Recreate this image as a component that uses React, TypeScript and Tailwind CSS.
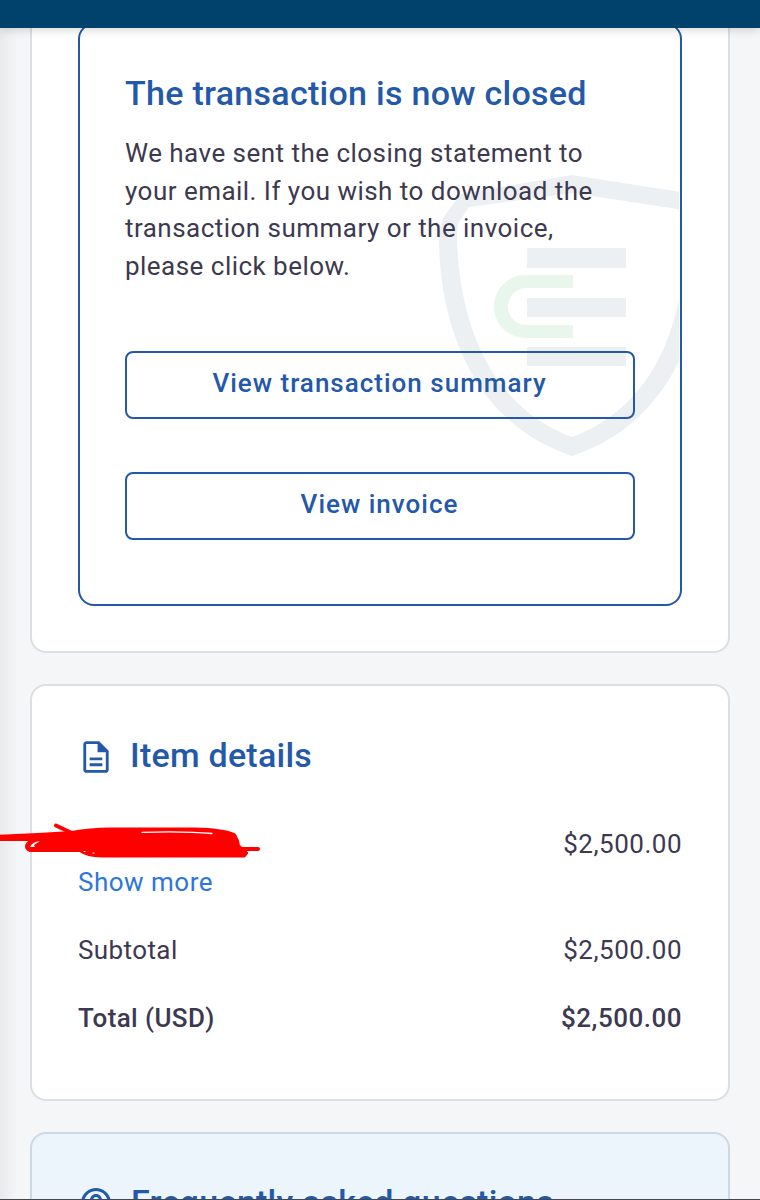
import type { ReactNode } from "react";

interface AmountRowProps {
  label: string;
  amount: string;
  bold?: boolean;
}

function AmountRow({ label, amount, bold }: AmountRowProps) {
  return (
    <div
      className={`flex justify-between text-[26px] leading-[38px] text-[#3d394f] ${
        bold ? "font-medium" : ""
      }`}
    >
      <span className="tracking-[0.4px]">{label}</span>
      <span className="tracking-[0.5px]">{amount}</span>
    </div>
  );
}

function OutlineButton({ children }: { children: ReactNode }) {
  return (
    <button className="flex h-[68px] w-full items-center justify-center rounded-lg border-2 border-[#2459a9] pr-[1px] pb-[3px] text-[26px] font-medium tracking-[1px] text-[#2459a9]">
      {children}
    </button>
  );
}

function ShieldWatermark() {
  return (
    <svg
      className="absolute top-[150px] left-[359px]"
      width="240"
      height="284"
      viewBox="0 0 240 284"
      fill="none"
    >
      <path
        fillRule="evenodd"
        fill="#edf0f3"
        d="M133 0 L241 17 Q267 22 267 58 C267 150 232 249 133 281 C35 249 0 151 0 62 Q0 48 8 37 L20 21 Q22 19 26 18 Z M133 18 L30 32 L20 47 Q18 51 18 62 C20 150 52 232 133 262 C214 232 246 150 246 60 Q246 38 238 34 Z"
      />
      <path fill="#edf0f3" d="M88 73h99v20H88zM88 123h99v19H88zM88 172h99v19H88z" />
      <path
        fill="#e8f6ec"
        d="M134 100v13H88c-11 0-19 8-19 18.500s8 18.500 19 18.500h46v13H86c-17 0-31-14-31-31.500S69 100 86 100z"
      />
    </svg>
  );
}

function DocumentIcon() {
  return (
    <svg className="mt-1 -ml-px" width="38" height="38" viewBox="0 0 24 24" fill="#2459a9">
      <path d="M8 16h8v1.800H8zm0-3.700h8v1.800H8zM14 2H6c-1.100 0-2 .9-2 2v16c0 1.100.89 2 1.990 2H18c1.100 0 2-.9 2-2V8l-6-6zm4.200 18.200H5.800V3.800H13V9h5.200v11.200z" />
    </svg>
  );
}

function HelpIcon() {
  return (
    <svg className="mt-px" width="36" height="36" viewBox="0 0 24 24" fill="#2459a9">
      <path d="M11 18h2v-2h-2v2zm1-16C6.480 2 2 6.480 2 12s4.480 10 10 10 10-4.480 10-10S17.520 2 12 2zm0 18c-4.410 0-8-3.590-8-8s3.590-8 8-8 8 3.590 8 8-3.590 8-8 8zm0-14c-2.210 0-4 1.790-4 4h2c0-1.100.9-2 2-2s2 .9 2 2c0 2-3 1.750-3 5h2c0-2.250 3-2.500 3-5 0-2.210-1.790-4-4-4z" />
    </svg>
  );
}

function Scribble() {
  return (
    <svg
      className="absolute top-[-5px] left-[-78px]"
      width="264"
      height="42"
      viewBox="0 820 264 42"
      fill="none"
      stroke="#fe0000"
      strokeWidth="4"
      strokeLinecap="round"
      strokeLinejoin="round"
    >
      <path
        fill="#fe0000"
        d="M-4 837 L38 835 L72 833 Q90 829.500 110 829.500 L195 829.500 Q222 830 234 835 L237 841 L238 846 L246 853 L244 855.500 L104 855.500 Q88 856 80 850 L30 850 Q24 847 30 842 L34 839 L-4 839 Z"
      />
      <path d="M56 825.500 L76 835" />
      <path d="M228 849 L258 849" />
      <path stroke="#fff" strokeWidth="1.300" d="M142 832.300 Q185 831 212 833.500" />
      <path stroke="none" fill="#fff" d="M30 847 Q32 842 40 841 L34 845 L35 847 Z" />
      <path stroke="#fff" strokeWidth="1.200" d="M84 851.500h1M93 853h1" />
    </svg>
  );
}

export default function App() {
  return (
    <div className="relative flex h-[1200px] w-[760px] flex-col overflow-hidden bg-[#f5f6f8] font-[Roboto,sans-serif]">
      <header className="relative z-10 h-7 shrink-0 bg-[#00426b] shadow-[0_2px_10px_rgba(0,0,0,0.16)]" />

      <main className="-mt-[52px] flex flex-col gap-[31px] bg-[linear-gradient(to_right,#e9eaec,#f5f6f8_18px)] px-[30px]">
        <section className="h-[677px] shrink-0 rounded-2xl border-2 border-[#dddee2] bg-white px-[46px] pt-[45px]">
          <div className="relative h-[583px] overflow-hidden rounded-2xl border-2 border-[#2459a9] px-[45px] pt-[46px]">
            <ShieldWatermark />
            <div className="relative">
              <h2 className="text-[34px] leading-[44px] font-medium tracking-[0.28px] whitespace-nowrap text-[#2459a9]">
                The transaction is now closed
              </h2>
              <p className="mt-[20px] text-[26px] leading-[37.7px] tracking-[0.47px] text-[#3d394f]">
                We have sent the closing statement to
                <br />
                your email. If you wish to download the
                <br />
                transaction summary or the invoice,
                <br />
                please click below.
              </p>
              <div className="mt-[65.2px] flex flex-col gap-[53px]">
                <OutlineButton>View transaction summary</OutlineButton>
                <OutlineButton>View invoice</OutlineButton>
              </div>
            </div>
          </div>
        </section>

        <section className="h-[417px] shrink-0 rounded-2xl border-2 border-[#dddee2] bg-white px-[46px] pt-[47px]">
          <div className="flex items-center gap-[15px] text-[#2459a9]">
            <DocumentIcon />
            <h2 className="text-[34px] leading-[44px] font-medium tracking-[0.25px]">Item details</h2>
          </div>
          <div className="relative mt-[48px]">
            <AmountRow label="" amount="$2,500.00" />
            <Scribble />
          </div>
          <a className="block text-[26px] leading-[38px] tracking-[0.5px] text-[#2d76dc]">
            Show more
          </a>
          <div className="mt-[30px] flex flex-col gap-[30px]">
            <AmountRow label="Subtotal" amount="$2,500.00" />
            <AmountRow label="Total (USD)" amount="$2,500.00" bold />
          </div>
        </section>

        <section className="h-[300px] shrink-0 rounded-2xl border-2 border-[#cdd8e2] bg-[#ecf4fc] px-[46px] pt-[46px]">
          <div className="flex items-center gap-[17px] text-[#2459a9]">
            <HelpIcon />
            <h2 className="text-[34px] leading-[44px] font-medium tracking-[0.22px]">
              Frequently asked questions
            </h2>
          </div>
        </section>
      </main>
      <div className="absolute bottom-0 left-0 h-px w-full bg-[#44484d]" />
    </div>
  );
}
